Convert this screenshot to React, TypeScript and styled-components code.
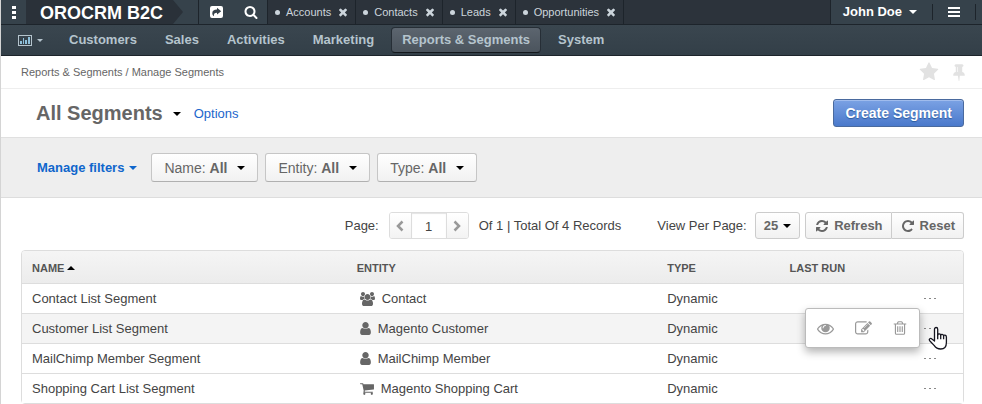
import React from "react";
import styled, { createGlobalStyle, css } from "styled-components";

const GlobalStyle = createGlobalStyle`
  *, *::before, *::after { box-sizing: border-box; }
  body {
    margin: 0;
    background: #fff;
    color: #444;
    font: 13px/20px "Liberation Sans", Arial, sans-serif;
  }
  button, input { font: inherit; color: inherit; margin: 0; }
  button { cursor: pointer; }
  a { color: inherit; text-decoration: none; }
`;

/* ---------- icons ---------- */

const glyphs = {
  close:
    "M1490 1322q0 40-28 68l-136 136q-28 28-68 28t-68-28l-294-294-294 294q-28 28-68 28t-68-28l-136-136q-28-28-28-68t28-68l294-294-294-294q-28-28-28-68t28-68l136-136q28-28 68-28t68 28l294 294 294-294q28-28 68-28t68 28l136 136q28 28 28 68t-28 68l-294 294 294 294q28 28 28 68z",
  search:
    "M1216 832q0-185-131.5-316.5t-316.5-131.5-316.5 131.5-131.5 316.5 131.5 316.5 316.5 131.5 316.5-131.5 131.5-316.5zm512 832q0 52-38 90t-90 38q-54 0-90-38l-343-342q-179 124-399 124-143 0-273.5-55.5t-225-150-150-225-55.5-273.5 55.5-273.5 150-225 225-150 273.5-55.5 273.5 55.5 225 150 150 225 55.5 273.5q0 220-124 399l343 343q37 37 37 90z",
  star: "M1728 647q0 22-26 48l-363 354 86 500q1 7 1 20 0 21-10.5 35.5t-30.5 14.5q-19 0-40-12l-449-236-449 236q-22 12-40 12-21 0-31.5-14.5t-10.5-35.5q0-6 2-20l86-500-364-354q-25-27-25-48 0-37 56-46l502-73 225-455q19-41 49-41t49 41l225 455 502 73q56 9 56 46z",
  pin: "M800 864v-448q0-14-9-23t-23-9-23 9-9 23v448q0 14 9 23t23 9 23-9 9-23zm672 352q0 26-19 45t-45 19h-429l-51 483q-2 12-10.5 20.5t-20.5 8.5h-1q-27 0-32-27l-76-485h-404q-26 0-45-19t-19-45q0-123 78.5-221.5t177.5-98.5v-512q-52 0-90-38t-38-90 38-90 90-38h640q52 0 90 38t38 90-38 90-90 38v512q99 0 177.5 98.5t78.5 221.5z",
  refresh:
    "M1639 1056q0 5-1 7-64 268-268 434.5t-478 166.5q-146 0-282.5-55t-243.5-157l-129 129q-19 19-45 19t-45-19-19-45v-448q0-26 19-45t45-19h448q26 0 45 19t19 45-19 45l-137 137q71 66 161 102t187 36q134 0 250-65t186-179q11-17 53-117 8-23 30-23h192q13 0 22.5 9.5t9.5 22.5zm25-800v448q0 26-19 45t-45 19h-448q-26 0-45-19t-19-45 19-45l138-138q-148-137-349-137-134 0-250 65t-186 179q-11 17-53 117-8 23-30 23h-199q-13 0-22.5-9.5t-9.5-22.5v-7q65-268 270-434.5t480-166.5q146 0 284 55.5t245 156.5l130-129q19-19 45-19t45 19 19 45z",
  repeat:
    "M1664 256v448q0 26-19 45t-45 19h-448q-42 0-59-40-17-39 14-69l138-138q-148-137-349-137-104 0-198.5 40.5t-163.5 109.5-109.5 163.5-40.5 198.5 40.5 198.5 109.5 163.5 163.5 109.5 198.5 40.5q119 0 225-52t179-147q7-10 23-12 15 0 25 9l137 138q9 8 9.5 20.5t-7.5 22.5q-109 132-264 204.5t-327 72.5q-156 0-298-61t-245-164-164-245-61-298 61-298 164-245 245-164 298-61q147 0 284.5 55.5t244.5 156.5l130-129q29-31 70-14 39 17 39 59z",
  user: "M1536 1399q0 109-62.5 187t-150.5 78h-854q-88 0-150.5-78t-62.5-187q0-85 8.5-160.5t31.5-152 58.5-131 94-89 134.5-34.5q131 128 313 128t313-128q76 0 134.5 34.5t94 89 58.5 131 31.5 152 8.5 160.5zm-256-887q0 159-112.5 271.5t-271.5 112.5-271.5-112.5-112.5-271.5 112.5-271.5 271.5-112.5 271.5 112.5 112.5 271.5z",
  group:
    "M593 896q-162 5-265 128h-134q-82 0-138-40.5t-56-118.5q0-353 124-353 6 0 43.5 21t97.5 42.5 119 21.5q67 0 133-23-5 37-5 66 0 139 81 256zm1071 637q0 120-73 189.5t-194 69.5h-874q-121 0-194-69.5t-73-189.5q0-53 3.5-103.5t14-109 26.5-108.5 43-97.5 62-81 85.5-53.5 111.5-20q10 0 43 21.5t73 48 107 48 135 21.5 135-21.5 107-48 73-48 43-21.5q61 0 111.5 20t85.5 53.5 62 81 43 97.5 26.5 108.5 14 109 3.5 103.5zm-1024-1277q0 106-75 181t-181 75-181-75-75-181 75-181 181-75 181 75 75 181zm704 384q0 159-112.5 271.5t-271.5 112.5-271.5-112.5-112.5-271.5 112.5-271.5 271.5-112.5 271.5 112.5 112.5 271.5zm576 225q0 78-56 118.5t-138 40.5h-134q-103-123-265-128 81-117 81-256 0-29-5-66 66 23 133 23 59 0 119-21.5t97.5-42.5 43.5-21q124 0 124 353zm-128-609q0 106-75 181t-181 75-181-75-75-181 75-181 181-75 181 75 75 181z",
  cart: "M704 1536q0 52-38 90t-90 38-90-38-38-90 38-90 90-38 90 38 38 90zm896 0q0 52-38 90t-90 38-90-38-38-90 38-90 90-38 90 38 38 90zm128-1088v512q0 24-16.5 42.5t-40.5 21.5l-1044 122q13 60 13 70 0 16-24 64h920q26 0 45 19t19 45-19 45-45 19h-1024q-26 0-45-19t-19-45q0-11 8-31.5t16-36 21.5-40 15.5-29.5l-177-823h-204q-26 0-45-19t-19-45 19-45 45-19h256q16 0 28.5 6.5t19.5 15.5 13 24.5 8 26 5.5 29.5 4.5 26h1201q26 0 45 19t19 45z",
  eye: "M1664 960q-152-236-381-353 61 104 61 225 0 185-131.5 316.5t-316.5 131.5-316.5-131.5-131.5-316.5q0-121 61-225-229 117-381 353 133 205 333.5 326.5t434.5 121.5 434.5-121.5 333.5-326.5zm-720-384q0-20-14-34t-34-14q-125 0-214.5 89.5t-89.5 214.5q0 20 14 34t34 14 34-14 14-34q0-86 61-147t147-61q20 0 34-14t14-34zm848 384q0 34-20 69-140 230-376.5 368.5t-499.5 138.5-499.5-139-376.5-368q-20-35-20-69t20-69q140-229 376.5-368t499.5-139 499.5 139 376.5 368q20 35 20 69z",
  edit: "M888 1184l116-116-152-152-116 116v56h96v96h56zm440-720q-16-16-33 1l-350 350q-17 17-1 33t33-1l350-350q17-17 1-33zm80 594v190q0 119-84.5 203.5t-203.5 84.5h-832q-119 0-203.5-84.5t-84.5-203.5v-832q0-119 84.5-203.5t203.5-84.5h832q63 0 117 25 15 7 18 23 3 17-9 29l-49 49q-14 14-32 8-23-6-45-6h-832q-66 0-113 47t-47 113v832q0 66 47 113t113 47h832q66 0 113-47t47-113v-126q0-13 9-22l64-64q15-15 35-7t20 29zm-96-738l288 288-672 672h-288v-288zm444 132l-92 92-288-288 92-92q28-28 68-28t68 28l152 152q28 28 28 68t-28 68z",
  trash:
    "M704 736v576q0 14-9 23t-23 9h-64q-14 0-23-9t-9-23v-576q0-14 9-23t23-9h64q14 0 23 9t9 23zm256 0v576q0 14-9 23t-23 9h-64q-14 0-23-9t-9-23v-576q0-14 9-23t23-9h64q14 0 23 9t9 23zm256 0v576q0 14-9 23t-23 9h-64q-14 0-23-9t-9-23v-576q0-14 9-23t23-9h64q14 0 23 9t9 23zm128 724v-948h-896v948q0 22 7 40.5t14.5 27 10.5 8.5h832q3 0 10.5-8.5t14.5-27 7-40.5zm-672-1076h448l-48-117q-7-9-17-11h-317q-10 2-17 11zm928 32v64q0 14-9 23t-23 9h-96v948q0 83-47 143.5t-113 60.5h-832q-66 0-113-58.5t-47-141.5v-952h-96q-14 0-23-9t-9-23v-64q0-14 9-23t23-9h309l70-167q15-37 54-63t79-26h320q40 0 79 26t54 63l70 167h309q14 0 23 9t9 23z",
};

type GlyphName = keyof typeof glyphs;

/* Glyphs whose advance is not the full 1792-unit square: left edge and width. */
const advance: Partial<Record<GlyphName, [number, number]>> = {
  user: [256, 1280],
  cart: [64, 1664],
  group: [0, 1920],
};

const Svg = styled.svg`
  display: block;
  flex: none;
  fill: currentColor;
`;

const Glyph = ({ name, size }: { name: GlyphName; size: number }) => {
  const [left, width] = advance[name] ?? [0, 1792];
  return (
    <Svg width={Math.round((size * width) / 1792)} height={size} viewBox={`${left} 0 ${width} 1792`} aria-hidden="true">
      <path d={glyphs[name]} />
    </Svg>
  );
};

const ShareIcon = () => (
  <Svg width="13" height="12" viewBox="0 0 13 12" aria-hidden="true">
    <path
      fillRule="evenodd"
      d="M2 0h9a2 2 0 0 1 2 2v8a2 2 0 0 1-2 2H2a2 2 0 0 1-2-2V2a2 2 0 0 1 2-2zM7 1.800v1.700C4 3.600 2.300 4.800 2.300 7.200c0 1.300.6 2.200 1.600 3C3.500 7.700 4.700 6.700 7 6.700v1.800L11.200 5.200z"
    />
  </Svg>
);

const ChartIcon = () => (
  <Svg width="14" height="11" viewBox="0 0 14 11" aria-hidden="true">
    <path fillRule="evenodd" d="M0 0h14v11H0zM1 1v9h12V1z" />
    <path fill="#8fc1dc" d="M2 6h2v3H2zM5 3h1v6H5zM7 5h2v4H7zM10 2h2v7h-2z" />
  </Svg>
);

const DotsIcon = () => (
  <Svg width="4" height="13" viewBox="0 0 4 13" aria-hidden="true">
    <path d="M0 0h4v3H0zM0 5h4v3H0zM0 10h4v3H0z" />
  </Svg>
);

const BarsIcon = () => (
  <Svg width="12" height="10" viewBox="0 0 12 10" aria-hidden="true">
    <path d="M0 0h12v2H0zM0 4h12v2H0zM0 8h12v2H0z" />
  </Svg>
);

const Chevron = ({ next }: { next?: boolean }) => (
  <Svg width="8" height="12" viewBox="0 0 8 12" aria-hidden="true">
    <path d={next ? "M1.500 1.500L6 6l-4.500 4.500" : "M6.500 1.500L2 6l4.500 4.500"} fill="none" stroke="currentColor" strokeWidth="2.500" />
  </Svg>
);

const HandIcon = () => (
  <Svg width="20" height="25" viewBox="0 0 20 25" aria-hidden="true">
    <path
      d="M6.500 15V3.200c0-2.300 3.200-2.300 3.200 0V9c0-1.600 3-1.600 3 .3 0-1.500 2.900-1.300 2.900.6 0-1.300 2.800-1.100 2.800 1v5.600c0 4-2.200 6.500-5.700 6.500-3.400 0-5-1.200-6.600-3.600L1.700 14.700c-1.200-1.700.8-3.100 2.200-1.700z"
      fill="#fff"
      stroke="#15151f"
      strokeWidth="1.300"
      strokeLinejoin="round"
    />
    <path d="M9.700 8.500v4.800M12.700 9v4.300M15.600 9.800v3.500" stroke="#15151f" strokeWidth="1.300" />
  </Svg>
);

const Caret = styled.span<{ $up?: boolean; $small?: boolean }>`
  flex: none;
  width: 0;
  height: 0;
  border: ${(p) => (p.$small ? 3 : 4)}px solid transparent;
  ${(p) =>
    p.$up
      ? css`border-bottom-color: currentColor; border-top-width: 0;`
      : css`border-top-color: currentColor; border-bottom-width: 0;`}
`;

/* ---------- header ---------- */

const Page = styled.div`
  border-left: 1px solid #d4d4d4;
`;

const TopBar = styled.header`
  display: flex;
  height: 25px;
  background: #2c333b;
  border-bottom: 1px solid #1d242b;
`;

const BarButton = styled.button<{ $width: number }>`
  display: flex;
  align-items: center;
  justify-content: center;
  width: ${(p) => p.$width}px;
  padding: 0;
  border: 0;
  background: none;
  color: #fff;
`;

const DotsArea = styled.div`
  display: flex;
  background: #36424b;
`;

const Brand = styled.a`
  display: flex;
  align-items: center;
  padding: 2px 9px 0 14px;
  background: #2a3139;
  color: #fff;
  font-size: 18px;
  font-weight: bold;
`;

const ToolArea = styled.div`
  display: flex;
  background: #36424b;
  border-right: 1px solid #1d242b;
`;

const BrandTip = styled.span`
  width: 27px;
  border-right: 1px solid #1d242b;
  &::before {
    content: "";
    display: block;
    width: 11px;
    height: 24px;
    background: #2a3139;
    clip-path: polygon(0 0, 1px 0, 100% 50%, 1px 100%, 0 100%);
  }
`;

const PinTabs = styled.nav`
  display: flex;
  flex: 1;
`;

const PinTab = styled.div`
  display: flex;
  align-items: center;
  padding: 0 6px 0 7px;
  border-right: 1px solid #1d242b;
  color: #ccd5dc;
  font-size: 11px;
  &::before {
    content: "";
    width: 5px;
    height: 5px;
    margin-right: 6px;
    border-radius: 50%;
    background: #ccd5dc;
  }
`;

const TabClose = styled.button`
  padding: 0;
  margin-left: 6px;
  border: 0;
  background: none;
`;

const UserArea = styled.div`
  display: flex;
  align-items: center;
  padding-right: 6px;
  background: #36424b;
  border-left: 1px solid #1d242b;
`;

const UserMenu = styled.button`
  display: flex;
  align-items: center;
  gap: 7px;
  height: 16px;
  padding: 0 15px 0 12px;
  border: 0;
  border-right: 1px solid #1d242b;
  background: none;
  color: #fff;
  font-weight: bold;
`;

const MenuSlot = styled.div`
  display: flex;
  height: 16px;
  border-right: 1px solid #1d242b;
`;

const MainNav = styled.nav`
  display: flex;
  align-items: center;
  height: 31px;
  padding-left: 17px;
  background: linear-gradient(#3a464f, #333f48);
  border-bottom: 1px solid #1d242b;
  color: #b5c4cd;
`;

const ChartMenu = styled.button`
  display: flex;
  align-items: center;
  gap: 5px;
  margin-right: 15px;
  padding: 0;
  border: 0;
  background: none;
`;

const NavLink = styled.a<{ $active?: boolean }>`
  padding: 2px 10px;
  margin-right: 6px;
  border: 1px solid transparent;
  border-radius: 4px;
  font-weight: bold;
  ${(p) =>
    p.$active &&
    css`
      background: linear-gradient(#5c656f, #4b545d);
      border-color: #262e36;
      border-bottom-color: #14181c;
    `}
`;

/* ---------- page head ---------- */

const CrumbBar = styled.div`
  display: flex;
  align-items: center;
  justify-content: space-between;
  height: 33px;
  padding: 0 14px 0 20px;
  border-bottom: 1px solid #eee;
  color: #666;
  font-size: 11px;
`;

const CrumbTools = styled.div`
  display: flex;
  gap: 11px;
`;

const MarkButton = styled.button`
  padding: 0;
  border: 0;
  background: none;
  color: #e2e2e2;
`;

const TitleBar = styled.div`
  display: flex;
  align-items: center;
  height: 48px;
  padding: 0 18px 0 35px;
  color: #000;
`;

const Title = styled.h1`
  margin: 0 10px 0 0;
  color: #666;
  font-size: 20px;
  line-height: 24px;
`;

const ViewMenu = styled.button`
  display: flex;
  padding: 2px 0 0;
  margin-right: 13px;
  border: 0;
  background: none;
`;

const OptionsLink = styled.a`
  margin-right: auto;
  padding-top: 2px;
  color: #1c66cc;
`;

const PrimaryButton = styled.button`
  height: 28px;
  padding: 0 11px;
  border: 1px solid #4a6a9e;
  border-radius: 3px;
  background: linear-gradient(#7ba2e4, #4a79cb);
  box-shadow: inset 0 1px 0 #a0bced;
  color: #fff;
  font-size: 14px;
  font-weight: bold;
  text-shadow: 0 1px 1px #2c5a9c;
`;

const FilterBar = styled.div`
  display: flex;
  align-items: center;
  gap: 7px;
  height: 61px;
  padding: 0 36px;
  background: #eee;
  border-top: 1px solid #e0e0e0;
  border-bottom: 1px solid #ddd;
`;

const ManageFilters = styled.button`
  display: flex;
  align-items: center;
  gap: 5px;
  margin-right: 7px;
  padding: 0;
  border: 0;
  background: none;
  color: #0f66cc;
  font-weight: bold;
`;

const FilterButton = styled.button`
  display: flex;
  align-items: center;
  height: 29px;
  padding: 0 12px;
  border: 1px solid #c6c6c6;
  border-bottom-color: #b0b0b0;
  border-radius: 3px;
  background: linear-gradient(#fff, #f1f1f1);
  color: #666;
  font-size: 14px;
  white-space: pre;
  ${Caret} { margin-left: 10px; color: #000; }
`;

/* ---------- grid ---------- */

const GridTools = styled.div`
  display: flex;
  align-items: center;
  justify-content: flex-end;
  height: 52px;
  padding: 3px 18px 0 20px;
`;

const PagerLabel = styled.label`
  margin-right: 10px;
`;

const Pager = styled.div`
  display: flex;
  height: 27px;
  margin-right: 10px;
  border: 1px solid #ddd;
  border-radius: 3px;
  overflow: hidden;
`;

const PagerButton = styled.button`
  display: flex;
  align-items: center;
  justify-content: center;
  width: 21px;
  padding: 0;
  border: 0;
  background: linear-gradient(#fff, #f3f3f3);
  color: #999;
`;

const PageInput = styled.input`
  width: 36px;
  padding: 2px 0 0;
  border: 1px solid #ddd;
  border-width: 0 1px;
  box-shadow: inset 0 1px 1px #e4e4e4;
  background: #fff;
  text-align: center;
`;

const Totals = styled.span`
  margin-right: 36px;
`;

const ToolButton = styled.button`
  display: flex;
  align-items: center;
  gap: 5px;
  height: 27px;
  padding: 0 8px 0 9px;
  border: 1px solid #ccc;
  border-radius: 3px;
  background: linear-gradient(#fff, #f1f1f1);
  color: #666;
  font-weight: bold;
`;

const SizeButton = styled(ToolButton)`
  padding: 0 8px;
  margin: 0 5px 0 8px;
  ${Caret} { color: #000; }
`;

const ButtonGroup = styled.div`
  display: flex;
  ${ToolButton}:first-child { border-radius: 3px 0 0 3px; }
  ${ToolButton}:last-child { border-radius: 0 3px 3px 0; border-left: 0; }
`;

const GridFrame = styled.div`
  margin: 0 18px 0 20px;
`;

const Grid = styled.table`
  width: 100%;
  table-layout: fixed;
  border: 1px solid #ddd;
  border-radius: 4px;
  border-spacing: 0;
`;

const HeadCell = styled.th<{ $share: number }>`
  width: ${(p) => p.$share}%;
  height: 32px;
  padding: 2px 0 0 10px;
  background: linear-gradient(#f5f5f5, #ececec);
  color: #555;
  font-size: 11px;
  text-align: left;
  &:first-child { border-top-left-radius: 3px; }
  &:last-child { border-top-right-radius: 3px; }
`;

const SortLabel = styled.span`
  display: flex;
  align-items: center;
  gap: 3px;
  ${Caret} { color: #000; }
`;

const Row = styled.tr<{ $hovered?: boolean }>`
  background: ${(p) => (p.$hovered ? "#f4f4f4" : "#fff")};
`;

const Cell = styled.td`
  height: 30px;
  padding: 0 0 0 10px;
  border-top: 1px solid #ddd;
`;

const Entity = styled.span`
  display: flex;
  align-items: center;
  gap: 7px;
  padding-left: 3px;
  svg { color: #666; }
`;

const ActionCell = styled(Cell)`
  position: relative;
  padding: 0 27px 0 0;
  color: #888;
`;

const MoreButton = styled.button`
  display: flex;
  gap: 3px;
  margin-left: auto;
  padding: 4px 0;
  border: 0;
  background: none;
  i { width: 2px; height: 1px; background: currentColor; }
`;

const ActionMenu = styled.div`
  position: absolute;
  z-index: 1;
  right: 43px;
  top: -6px;
  display: flex;
  align-items: center;
  justify-content: space-between;
  width: 115px;
  height: 40px;
  padding: 0 11px;
  border: 1px solid #bbb;
  border-radius: 3px;
  background: #fff;
  box-shadow: 0 4px 9px rgba(0, 0, 0, 0.3);
`;

const ActionButton = styled.button`
  padding: 0;
  border: 0;
  background: none;
  color: #999;
`;

const Pointer = styled.span`
  position: absolute;
  z-index: 2;
  right: 15px;
  top: 12px;
  pointer-events: none;
`;

const pinned = ["Accounts", "Contacts", "Leads", "Opportunities"];
const sections = ["Customers", "Sales", "Activities", "Marketing", "Reports & Segments", "System"];
const filters = ["Name", "Entity", "Type"];
const segments: { name: string; entity: string; icon: GlyphName; type: string }[] = [
  { name: "Contact List Segment", entity: "Contact", icon: "group", type: "Dynamic" },
  { name: "Customer List Segment", entity: "Magento Customer", icon: "user", type: "Dynamic" },
  { name: "MailChimp Member Segment", entity: "MailChimp Member", icon: "user", type: "Dynamic" },
  { name: "Shopping Cart List Segment", entity: "Magento Shopping Cart", icon: "cart", type: "Dynamic" },
];
const openRow = 1;

export default function App() {
  return (
    <Page>
      <GlobalStyle />
      <TopBar>
        <DotsArea>
          <BarButton $width={25} aria-label="Applications"><DotsIcon /></BarButton>
        </DotsArea>
        <Brand href="#">OROCRM B2C</Brand>
        <ToolArea>
          <BrandTip />
          <BarButton $width={35} aria-label="Share"><ShareIcon /></BarButton>
          <BarButton $width={33} aria-label="Search"><Glyph name="search" size={14} /></BarButton>
        </ToolArea>
        <PinTabs aria-label="Pinned pages">
          {pinned.map((tab) => (
            <PinTab key={tab}>
              <a href="#">{tab}</a>
              <TabClose aria-label={`Close ${tab}`}><Glyph name="close" size={12} /></TabClose>
            </PinTab>
          ))}
        </PinTabs>
        <UserArea>
          <UserMenu>John Doe <Caret /></UserMenu>
          <MenuSlot><BarButton $width={42} aria-label="Menu"><BarsIcon /></BarButton></MenuSlot>
        </UserArea>
      </TopBar>
      <MainNav aria-label="Main">
        <ChartMenu aria-label="Dashboards"><ChartIcon /><Caret $small /></ChartMenu>
        {sections.map((s) => (
          <NavLink key={s} href="#" $active={s === "Reports & Segments"}>{s}</NavLink>
        ))}
      </MainNav>

      <CrumbBar>
        <span>Reports &amp; Segments / Manage Segments</span>
        <CrumbTools>
          <MarkButton aria-label="Favourite"><Glyph name="star" size={20} /></MarkButton>
          <MarkButton aria-label="Pin"><Glyph name="pin" size={18} /></MarkButton>
        </CrumbTools>
      </CrumbBar>
      <TitleBar>
        <Title>All Segments</Title>
        <ViewMenu aria-label="Choose view"><Caret /></ViewMenu>
        <OptionsLink href="#">Options</OptionsLink>
        <PrimaryButton>Create Segment</PrimaryButton>
      </TitleBar>
      <FilterBar>
        <ManageFilters>Manage filters <Caret /></ManageFilters>
        {filters.map((f) => (
          <FilterButton key={f}>{f}: <b>All</b><Caret /></FilterButton>
        ))}
      </FilterBar>

      <GridTools>
        <PagerLabel htmlFor="page">Page:</PagerLabel>
        <Pager>
          <PagerButton aria-label="Previous page"><Chevron /></PagerButton>
          <PageInput id="page" defaultValue="1" />
          <PagerButton aria-label="Next page"><Chevron next /></PagerButton>
        </Pager>
        <Totals>Of 1 | Total Of 4 Records</Totals>
        <span id="per-page">View Per Page:</span>
        <SizeButton aria-describedby="per-page">25 <Caret /></SizeButton>
        <ButtonGroup>
          <ToolButton><Glyph name="refresh" size={14} />Refresh</ToolButton>
          <ToolButton><Glyph name="repeat" size={14} />Reset</ToolButton>
        </ButtonGroup>
      </GridTools>
      <GridFrame>
        <Grid>
          <thead>
            <tr>
              <HeadCell $share={34.5}><SortLabel>NAME <Caret $up /></SortLabel></HeadCell>
              <HeadCell $share={33}>ENTITY</HeadCell>
              <HeadCell $share={13}>TYPE</HeadCell>
              <HeadCell $share={12}>LAST RUN</HeadCell>
              <HeadCell $share={7.5} aria-label="Actions" />
            </tr>
          </thead>
          <tbody>
            {segments.map((row, i) => (
              <Row key={row.name} $hovered={i === openRow}>
                <Cell>{row.name}</Cell>
                <Cell>
                  <Entity>
                    <Glyph name={row.icon} size={row.icon === "group" ? 14 : 15} />
                    {row.entity}
                  </Entity>
                </Cell>
                <Cell>{row.type}</Cell>
                <Cell />
                <ActionCell>
                  <MoreButton aria-label={`Actions for ${row.name}`}><i /><i /><i /></MoreButton>
                  {i === openRow && (
                    <>
                      <ActionMenu>
                        <ActionButton aria-label="View"><Glyph name="eye" size={17} /></ActionButton>
                        <ActionButton aria-label="Edit"><Glyph name="edit" size={17} /></ActionButton>
                        <ActionButton aria-label="Delete"><Glyph name="trash" size={16} /></ActionButton>
                      </ActionMenu>
                      <Pointer><HandIcon /></Pointer>
                    </>
                  )}
                </ActionCell>
              </Row>
            ))}
          </tbody>
        </Grid>
      </GridFrame>
    </Page>
  );
}
